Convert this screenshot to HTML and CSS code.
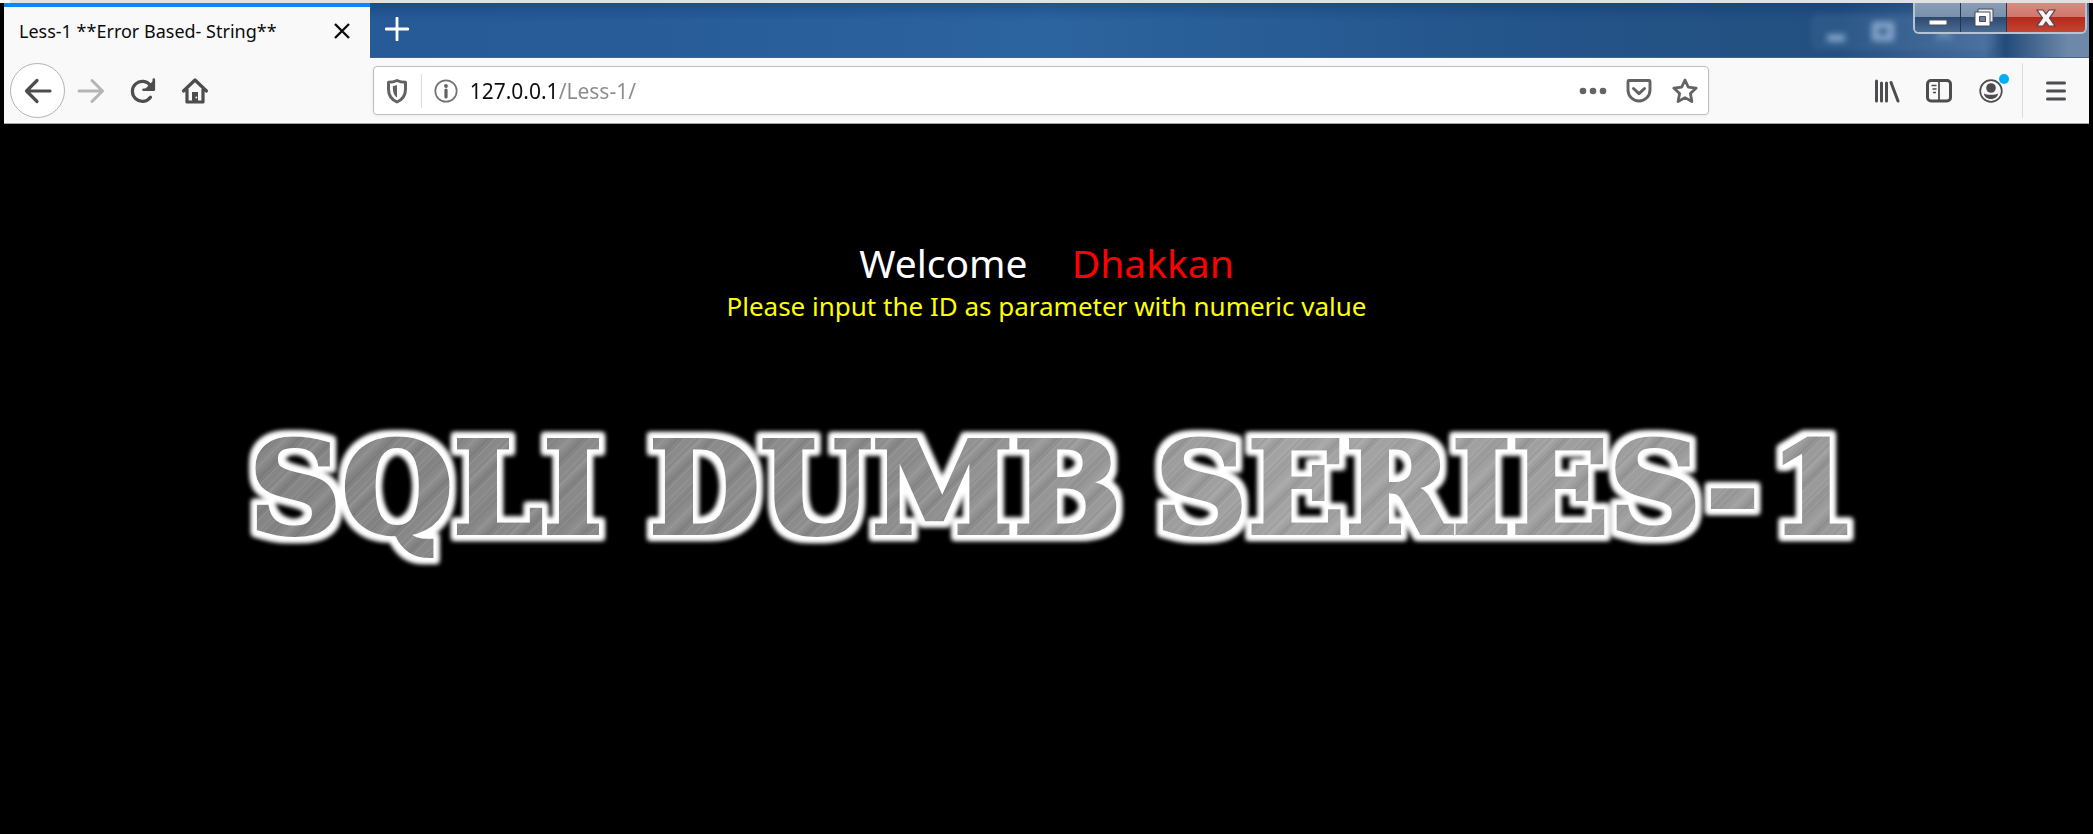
FILE: index.html
```html
<!DOCTYPE html>
<html lang="en">
<head>
<meta charset="utf-8">
<title>Less-1 **Error Based- String**</title>
<link rel="stylesheet" href="styles.css">
</head>
<body>
<div class="desktop-edge"></div>
<div class="window">
  <header class="tabstrip">
    <div class="tab">
      <span class="tab-title">Less-1 **Error Based- String**</span>
      <button class="tab-close" aria-label="Close tab"><svg width="16" height="16" viewBox="0 0 16 16"><path d="M1 1l14 14M15 1L1 15" stroke="#0c0c0d" stroke-width="2.4"/></svg></button>
    </div>
    <button class="new-tab" aria-label="New tab"><svg width="24" height="24" viewBox="0 0 24 24"><path d="M12 1v22M1 12h22" stroke="#fff" stroke-width="2.8" stroke-linecap="round"/></svg></button>
    <div class="ghost">
      <svg width="220" height="40" viewBox="0 0 220 40"><rect x="2" y="2" width="180" height="32" rx="5" fill="#6d93c4" fill-opacity=".12" stroke="#82a5cf" stroke-opacity=".35"/><g fill="none" stroke="#a9c5e6" stroke-opacity=".75"><path d="M16 24h18" stroke-width="7"/><rect x="64" y="11" width="16" height="13" stroke-width="6"/><path d="M126 11l14 14M140 11l-14 14" stroke-width="5" stroke-opacity=".4"/></g></svg>
    </div>
    <div class="controls">
      <button class="control" aria-label="Minimize"><svg width="22" height="20" viewBox="0 0 22 20"><rect x="2" y="12" width="18" height="5" rx="1" fill="#fff" stroke="#4b5262"/></svg></button>
      <button class="control" aria-label="Restore"><svg width="24" height="22" viewBox="0 0 24 22"><path d="M6 2h15v13H6z" fill="#eee" stroke="#444c5e"/><path d="M3 5h15v14H3z" fill="#fff" stroke="#444c5e"/><path d="M7.500 9.500h6v5h-6z" fill="#6d7f98" stroke="#444c5e"/></svg></button>
      <button class="control control-close" aria-label="Close"><svg width="22" height="20" viewBox="0 0 22 20"><path d="M2 2h6l3 4 3-4h6l-5.500 8 5.500 8h-6l-3-4-3 4H2l5.500-8z" fill="#f5f5f5" stroke="#5a4350" stroke-width="1.200"/></svg></button>
    </div>
  </header>
  <nav class="toolbar">
    <button class="back" aria-label="Back"><svg width="28" height="26" viewBox="0 0 28 26"><path d="M26 13H3M13 2.500L2.500 13 13 23.500" fill="none" stroke="#4d4d4f" stroke-width="3.200" stroke-linecap="round" stroke-linejoin="round"/></svg></button>
    <button class="tool" aria-label="Forward"><svg width="28" height="26" viewBox="0 0 28 26"><path d="M2 13h23M15 2.500L25.500 13 15 23.500" fill="none" stroke="#b5b5b6" stroke-width="3" stroke-linecap="round" stroke-linejoin="round"/></svg></button>
    <button class="tool" aria-label="Reload"><svg width="26" height="26" viewBox="0 0 26 26"><path d="M20.500 19.200A10 10 0 1 1 20.500 7.500" fill="none" stroke="#4d4d4f" stroke-width="3.200" stroke-linecap="round"/><path d="M23.800 1.500v10.300H13.500" fill="none" stroke="#4d4d4f" stroke-width="2.600" stroke-linecap="round" stroke-linejoin="round"/><path d="M23 3v8h-8z" fill="#4d4d4f"/></svg></button>
    <button class="tool" aria-label="Home"><svg width="28" height="28" viewBox="0 0 28 28"><path d="M2.500 14L14 3l11.500 11M6 12.500V25h16V12.500" fill="none" stroke="#4d4d4f" stroke-width="3.200" stroke-linecap="round" stroke-linejoin="round"/><path d="M11 15h6v10h-6z" fill="#4d4d4f"/><circle cx="15.300" cy="20.500" r=".9" fill="#f9f9fa"/></svg></button>
    <div class="spacer"></div>
    <div class="urlbar">
      <button class="shield" aria-label="Tracking protection"><svg width="22" height="26" viewBox="0 0 22 26"><path d="M11 2.500c3 1.400 5.600 1.700 8.500 1.700v7C19.500 17.500 16.500 21.500 11 24 5.500 21.500 2.500 17.500 2.500 11.200v-7c2.900 0 5.500-.3 8.500-1.700z" fill="none" stroke="#636365" stroke-width="3" stroke-linejoin="round"/><path d="M11 7v12.500C8 17.600 6.800 14.500 6.800 8c1.500-.1 2.800-.4 4.200-1z" fill="#636365"/></svg></button>
      <button class="info" aria-label="Site information"><svg width="24" height="24" viewBox="0 0 24 24"><circle cx="12" cy="12" r="10.700" fill="none" stroke="#737373" stroke-width="1.700"/><circle cx="12" cy="7" r="1.900" fill="#636365"/><path d="M12 11v7" stroke="#636365" stroke-width="3.200" stroke-linecap="round"/></svg></button>
      <input class="address" type="text" aria-label="Address" value="127.0.0.1/Less-1/">
      <button class="page-action" aria-label="Page actions"><svg width="28" height="10" viewBox="0 0 28 10"><g fill="#636365"><circle cx="4" cy="5" r="3.300"/><circle cx="14" cy="5" r="3.300"/><circle cx="24" cy="5" r="3.300"/></g></svg></button>
      <button class="page-action" aria-label="Save to Pocket"><svg width="28" height="26" viewBox="0 0 28 26"><path d="M4 2.500h20c.6 0 1 .4 1 1V12a11 11 0 0 1-22 0V3.500c0-.6.400-1 1-1z" fill="none" stroke="#636365" stroke-width="2.900"/><path d="M8.500 10.500l5.500 5.200 5.500-5.200" fill="none" stroke="#636365" stroke-width="3" stroke-linecap="round" stroke-linejoin="round"/></svg></button>
      <button class="page-action" aria-label="Bookmark this page"><svg width="28" height="28" viewBox="0 0 28 28"><path d="M14 3l3.300 7.200 7.900.9-5.800 5.400 1.500 8-6.900-3.900-6.900 3.900 1.500-8L2.800 11.100l7.900-.9z" fill="none" stroke="#636365" stroke-width="2.800" stroke-linejoin="round"/></svg></button>
    </div>
    <div class="spacer"></div>
    <button class="tool" aria-label="Library"><svg width="28" height="26" viewBox="0 0 28 26"><g stroke="#4d4d4f" stroke-width="3" stroke-linecap="round"><path d="M3.500 3v20M8.500 5v18M13.500 5v18M18 4.500L25 23"/></g></svg></button>
    <button class="tool" aria-label="Sidebars"><svg width="28" height="26" viewBox="0 0 28 26"><rect x="2.500" y="2.500" width="23" height="20.500" rx="3.500" fill="none" stroke="#4d4d4f" stroke-width="3"/><path d="M14 3v20" stroke="#4d4d4f" stroke-width="1.800"/><path d="M6.500 7.500h5M7.500 11h4M8 14.500h3" stroke="#4d4d4f" stroke-width="1.600"/></svg></button>
    <button class="tool account" aria-label="Account"><svg width="26" height="26" viewBox="0 0 26 26"><circle cx="13" cy="13" r="10.800" fill="none" stroke="#4d4d4f" stroke-width="1.700"/><circle cx="13" cy="10" r="4.800" fill="#4d4d4f"/><path d="M6 15.500c2 1.800 12 1.800 14 0 0 3-3 5.500-7 5.500s-7-2.500-7-5.500z" fill="#4d4d4f"/></svg><span class="badge"></span></button>
    <div class="menu-wrap"><button class="menu" aria-label="Open menu"><svg width="22" height="22" viewBox="0 0 22 22"><path d="M2.500 3h17M2.500 11h17M2.500 19h17" stroke="#4d4d4f" stroke-width="3" stroke-linecap="round"/></svg></button></div>
  </nav>
  <main class="page">
    <h1 class="welcome">Welcome <span class="name">Dhakkan</span></h1>
    <p class="hint">Please input the ID as parameter with numeric value</p>
    <svg class="banner" viewBox="0 0 1640 200" role="img" aria-label="SQLI DUMB SERIES-1">
      <defs>
        <linearGradient id="tone" x1="0" x2="1"><stop offset="0" stop-color="#858585"/><stop offset=".4" stop-color="#8d8d8d"/><stop offset=".65" stop-color="#a4a4a4"/><stop offset="1" stop-color="#999"/></linearGradient>
        <pattern id="steel" width="1640" height="200" patternUnits="userSpaceOnUse">
          <rect width="1640" height="200" fill="url(#tone)"/>
          <rect width="1640" height="200" fill="url(#brush)"/>
        </pattern>
        <pattern id="brush" width="67" height="67" patternUnits="userSpaceOnUse" patternTransform="rotate(45)">
          <g fill="#fff"><path fill-opacity=".04" d="M2 0h7v67H2zM25 0h9v67h-9zM50 0h6v67h-6z"/><path fill-opacity=".1" d="M5 0h1v67H5zM19 0h1v67h-1zM31 0h1v67h-1zM43 0h1v67h-1zM61 0h1v67h-1z"/></g>
          <g fill="#000"><path fill-opacity=".04" d="M11 0h8v67h-8zM36 0h7v67h-7zM57 0h8v67h-8z"/><path fill-opacity=".08" d="M14 0h1v67h-1zM28 0h1v67h-1zM39 0h1v67h-1zM53 0h1v67h-1z"/></g>
        </pattern>
        <filter id="glow" filterUnits="userSpaceOnUse" x="0" y="0" width="1640" height="200">
          <feMorphology in="SourceAlpha" operator="dilate" radius="5" result="fat"/>
          <feGaussianBlur in="fat" stdDeviation="2.500" result="soft"/>
          <feFlood flood-color="#fff"/>
          <feComposite in2="soft" operator="in" result="halo"/>
          <feMerge><feMergeNode in="halo"/><feMergeNode in="halo"/><feMergeNode in="SourceGraphic"/></feMerge>
        </filter>
      </defs>
      <g class="banner-text" filter="url(#glow)">
        <text x="22" y="138">SQLI</text>
        <text x="422" y="138">DUMB</text>
        <text x="928" y="138">SERIES-</text>
        <text x="1542" y="138">1</text>
      </g>
    </svg>
  </main>
</div>
</body>
</html>
```
FILE: styles.css
```css
* { box-sizing: border-box; }

body {
  margin: 0;
  min-height: 100vh;
  background: #000;
  font-family: "Noto Sans", "Open Sans", sans-serif;
}

button {
  display: flex;
  align-items: center;
  justify-content: center;
  flex: none;
  padding: 0;
  border: 0;
  background: none;
}

.desktop-edge { height: 3px; background: linear-gradient(90deg, #fff 10px, #e1e1e1 10px); }
.window { margin: 0 4px; }

.tabstrip {
  position: relative;
  display: flex;
  height: 55px;
  background:
    linear-gradient(180deg, rgba(10, 50, 110, .35), transparent 18px),
    linear-gradient(90deg, #255893 0, #275c99 30%, #2c649f 50%, #235388 75%, #23507f 88%, #466c9b 95%, #234c7b 96%, #6d88a8 99%);
  border-bottom: 1px solid #46648c;
}

.tab {
  display: flex;
  align-items: center;
  justify-content: space-between;
  width: 366px;
  height: 55px;
  padding: 0 20px 4px 15px;
  border-top: 4px solid #0a84ff;
  background: #f9f9fa;
}

.tab-title { font-size: 18px; line-height: 24px; color: #0c0c0d; white-space: nowrap; }
.tab-close { width: 16px; height: 24px; }
.new-tab { width: 54px; height: 52px; }

.ghost { position: absolute; right: 58px; top: 11px; filter: blur(3px); }

.controls {
  position: absolute;
  top: 0;
  right: 2px;
  display: flex;
  height: 31px;
  border: 2px solid #b5c3d4;
  border-top: 0;
  border-radius: 0 0 6px 6px;
  overflow: hidden;
}

.control {
  width: 46px;
  border-right: 1px solid #25354d;
  background: linear-gradient(180deg, #8b9db6 0, #7890ac 48%, #2c4a70 50%, #4b6b92 100%);
}

.control-close {
  width: 78px;
  border-right: 0;
  background: linear-gradient(180deg, #d98a80 0, #d0776c 48%, #b5291a 50%, #c44632 100%);
}

.toolbar {
  display: flex;
  align-items: center;
  height: 66px;
  padding-left: 6px;
  background: #f9f9fa;
  border-bottom: 1px solid #a5a5a7;
}

.back { width: 55px; height: 55px; border: 1px solid #b3b3b4; border-radius: 50%; background: #fff; }
.tool { width: 52px; height: 52px; }
.spacer { flex: 10; }

.urlbar {
  display: flex;
  align-items: center;
  flex: 88;
  height: 49px;
  border: 1px solid #bebebf;
  border-radius: 4px;
  background: #fff;
  box-shadow: 0 1px 4px rgba(0, 0, 0, .06);
}

.shield { width: 48px; height: 34px; border-right: 1px solid #dcdcdd; }
.info { width: 48px; height: 34px; }

.address {
  flex: 1;
  min-width: 0;
  height: 40px;
  padding: 0;
  border: 0;
  outline: 0;
  font: 21px/32px "Noto Sans", "Open Sans", sans-serif;
  color: transparent;
  background: linear-gradient(90deg, #0c0c0d 89px, #8b8b8c 89px);
  background-clip: text;
  -webkit-background-clip: text;
}

.page-action { width: 46px; height: 40px; }
.account { position: relative; }

.badge {
  position: absolute;
  top: 9px;
  right: 8px;
  width: 10px;
  height: 10px;
  border-radius: 50%;
  background: #00aff5;
}

.menu-wrap { flex: none; margin-left: 5px; border-left: 1px solid #dcdcdd; }
.menu { width: 66px; height: 55px; }

.page {
  display: flex;
  flex-direction: column;
  align-items: center;
  padding-top: 112px;
}

.welcome { margin: 0; font-size: 39px; line-height: 54px; font-weight: 400; color: #fff; }
.name { margin-left: 34px; color: #f00; }
.hint { margin: 0; font-size: 26px; line-height: 32px; color: #ff0; }

.banner { width: 90%; max-width: 1640px; margin-top: 73px; }

.banner-text {
  font-family: "DejaVu Serif", serif;
  font-size: 128px;
  font-weight: 700;
  fill: url(#steel);
  stroke: url(#steel);
  stroke-width: 4px;
}
```
